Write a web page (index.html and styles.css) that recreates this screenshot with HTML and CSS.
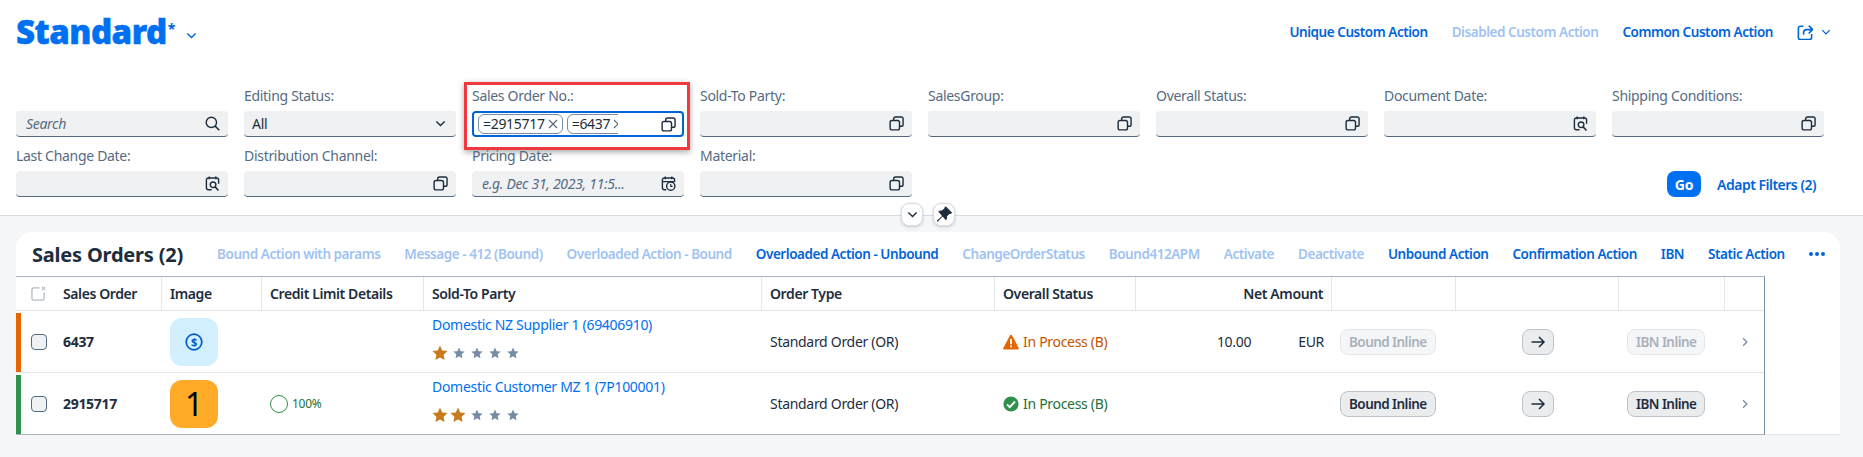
FILE: index.html
```html
<!DOCTYPE html>
<html lang="en">
  <head>
    <meta charset="UTF-8" />
    <meta name="viewport" content="width=device-width, initial-scale=1.0" />
    <title>Sales Orders</title>
    <link rel="stylesheet" href="styles.css">
  </head>
  <body>
    <svg class="defs" width="0" height="0">
      <symbol id="i-copy" viewBox="0 0 16 16">
        <rect x="1.2" y="4.8" width="10" height="10" rx="2" fill="none" stroke="currentColor" stroke-width="1.5" />
        <path d="M5 4.8V3a2 2 0 0 1 2-2h6a2 2 0 0 1 2 2v6a2 2 0 0 1-2 2h-1.8" fill="none" stroke="currentColor" stroke-width="1.5" />
      </symbol>
      <symbol id="i-search" viewBox="0 0 16 16">
        <circle cx="6.8" cy="6.8" r="5.5" fill="none" stroke="currentColor" stroke-width="1.5" />
        <path d="M10.8 10.8l4.4 4.4" stroke="currentColor" stroke-width="1.6" />
      </symbol>
      <symbol id="i-cal-search" viewBox="0 0 16 16">
        <path d="M7 14.6H3.5a2 2 0 0 1-2-2V4.2a2 2 0 0 1 2-2h9a2 2 0 0 1 2 2v4" fill="none" stroke="currentColor" stroke-width="1.5" />
        <path d="M4.5.5v3M11.5.5v3" stroke="currentColor" stroke-width="1.5" />
        <circle cx="8.6" cy="9.4" r="3" fill="none" stroke="currentColor" stroke-width="1.5" />
        <path d="M10.8 11.6l3.6 3.8" stroke="currentColor" stroke-width="1.6" />
      </symbol>
      <symbol id="i-cal-time" viewBox="0 0 16 16">
        <path d="M5.5 14.6h-2a2 2 0 0 1-2-2V4.2a2 2 0 0 1 2-2h9a2 2 0 0 1 2 2v2" fill="none" stroke="currentColor" stroke-width="1.5" />
        <path d="M4.5.5v3M11.5.5v3M1.5 6h13" stroke="currentColor" stroke-width="1.5" />
        <circle cx="10.4" cy="10.8" r="4.4" fill="#eff1f2" stroke="currentColor" stroke-width="1.5" />
        <path d="M10.4 8.6v2.4h2" fill="none" stroke="currentColor" stroke-width="1.2" />
      </symbol>
      <symbol id="i-chevron" viewBox="0 0 16 16">
        <path d="M2 5l6 6 6-6" fill="none" stroke="currentColor" stroke-width="2" />
      </symbol>
      <symbol id="i-close" viewBox="0 0 10 10">
        <path d="M1 1l8 8M9 1l-8 8" fill="none" stroke="currentColor" stroke-width="1.2" />
      </symbol>
      <symbol id="i-star" viewBox="0 0 16 16">
        <path d="M8 .6l2.2 4.9 5.3.6-3.9 3.6 1 5.3L8 12.4l-4.6 2.6 1-5.3L.5 6.1l5.3-.6z" fill="currentColor" />
      </symbol>
    </svg>

    <header class="top">
      <div class="title-row">
        <div class="variant">
          <h1>Standard</h1>
          <span class="dirty">*</span>
          <svg class="variant-arrow"><use href="#i-chevron" /></svg>
        </div>
        <nav class="actions">
          <a class="act">Unique Custom Action</a>
          <a class="act off">Disabled Custom Action</a>
          <a class="act">Common Custom Action</a>
          <span class="share">
            <svg class="share-icon" viewBox="0 0 16 16">
              <path d="M6.5 2.2H3.4a2 2 0 0 0-2 2v9.4a2 2 0 0 0 2 2h9.2a2 2 0 0 0 2-2V10" fill="none" stroke="currentColor" stroke-width="1.6" />
              <path d="M6.6 10.8V8.6a3 3 0 0 1 3-3H15M11.8 1.600L15.6 5.500l-3.800 3.900" fill="none" stroke="currentColor" stroke-width="1.6" />
            </svg>
            <svg class="share-arrow"><use href="#i-chevron" /></svg>
          </span>
        </nav>
      </div>

      <div class="filters">
        <div class="filter">
          <label></label>
          <div class="field"><span class="ph">Search</span><svg class="ico"><use href="#i-search" /></svg></div>
        </div>
        <div class="filter">
          <label>Editing Status:</label>
          <div class="field"><span class="val">All</span><svg class="ico small"><use href="#i-chevron" /></svg></div>
        </div>
        <div class="filter marked">
          <label>Sales Order No.:</label>
          <div class="field focused">
            <div class="tokens">
              <span class="token">=2915717<svg class="token-x"><use href="#i-close" /></svg></span>
              <span class="token">=6437<svg class="token-x"><use href="#i-close" /></svg></span>
            </div>
            <svg class="ico"><use href="#i-copy" /></svg>
          </div>
          <div class="mark"></div>
        </div>
        <div class="filter">
          <label>Sold-To Party:</label>
          <div class="field"><svg class="ico"><use href="#i-copy" /></svg></div>
        </div>
        <div class="filter">
          <label>SalesGroup:</label>
          <div class="field"><svg class="ico"><use href="#i-copy" /></svg></div>
        </div>
        <div class="filter">
          <label>Overall Status:</label>
          <div class="field"><svg class="ico"><use href="#i-copy" /></svg></div>
        </div>
        <div class="filter">
          <label>Document Date:</label>
          <div class="field"><svg class="ico"><use href="#i-cal-search" /></svg></div>
        </div>
        <div class="filter">
          <label>Shipping Conditions:</label>
          <div class="field"><svg class="ico"><use href="#i-copy" /></svg></div>
        </div>
        <div class="filter">
          <label>Last Change Date:</label>
          <div class="field"><svg class="ico"><use href="#i-cal-search" /></svg></div>
        </div>
        <div class="filter">
          <label>Distribution Channel:</label>
          <div class="field"><svg class="ico"><use href="#i-copy" /></svg></div>
        </div>
        <div class="filter">
          <label>Pricing Date:</label>
          <div class="field"><span class="ph">e.g. Dec 31, 2023, 11:5...</span><svg class="ico"><use href="#i-cal-time" /></svg></div>
        </div>
        <div class="filter">
          <label>Material:</label>
          <div class="field"><svg class="ico"><use href="#i-copy" /></svg></div>
        </div>
        <div class="filter-btns">
          <button class="go">Go</button>
          <a class="adapt">Adapt Filters (2)</a>
        </div>
      </div>
    </header>

    <div class="collapse-btns">
      <span class="mini"><svg class="mini-arrow"><use href="#i-chevron" /></svg></span>
      <span class="mini">
        <svg class="pin" viewBox="0 0 16 16">
          <path d="M9.600.8l5.600 5.600-1.400 1.100-1.100-.2-2.500 2.600c.4 1.300.1 2.500-.8 3.500L6.200 9.800l-4.600 5-.9-.9 5-4.600L2.100 5.100c1-.9 2.200-1.200 3.500-.8l2.600-2.500-.2-1.100z" fill="currentColor" />
        </svg>
      </span>
    </div>

    <section class="card">
      <div class="toolbar">
        <h2>Sales Orders (2)</h2>
        <a class="act off">Bound Action with params</a>
        <a class="act off">Message - 412 (Bound)</a>
        <a class="act off">Overloaded Action - Bound</a>
        <a class="act">Overloaded Action - Unbound</a>
        <a class="act off">ChangeOrderStatus</a>
        <a class="act off">Bound412APM</a>
        <a class="act off">Activate</a>
        <a class="act off">Deactivate</a>
        <a class="act">Unbound Action</a>
        <a class="act">Confirmation Action</a>
        <a class="act">IBN</a>
        <a class="act">Static Action</a>
        <span class="more"><i></i><i></i><i></i></span>
      </div>

      <table class="orders">
        <colgroup>
          <col class="c1" /><col class="c2" /><col class="c3" /><col class="c4" />
          <col class="c5" /><col class="c6" /><col class="c7" /><col class="c8" />
          <col class="c9" /><col class="c10" /><col class="c11" />
        </colgroup>
        <thead>
          <tr>
            <th class="first">
              <div class="sel">
                <svg class="clear-all" viewBox="0 0 16 16">
                  <path d="M9 2H3a2 2 0 0 0-2 2v9a2 2 0 0 0 2 2h9a2 2 0 0 0 2-2V7" fill="none" stroke="currentColor" stroke-width="1.4" />
                  <path d="M11.500 1l3.500 3.500M15 1l-3.500 3.500" stroke="currentColor" stroke-width="1.2" />
                </svg>
                Sales Order
              </div>
            </th>
            <th>Image</th>
            <th>Credit Limit Details</th>
            <th>Sold-To Party</th>
            <th>Order Type</th>
            <th>Overall Status</th>
            <th class="right">Net Amount</th>
            <th></th>
            <th></th>
            <th></th>
            <th></th>
          </tr>
        </thead>
        <tbody>
          <tr>
            <td class="first">
              <div class="sel"><span class="bar warn"></span><span class="check"></span><b>6437</b></div>
            </td>
            <td><div class="thumb blue">
              <svg class="dollar" viewBox="0 0 18 18">
                <circle cx="9" cy="9" r="7.800" fill="none" stroke="currentColor" stroke-width="1.700" />
                <text x="9" y="13" text-anchor="middle" class="dollar-sign">$</text>
              </svg>
            </div></td>
            <td></td>
            <td class="party">
              <a class="link">Domestic NZ Supplier 1 (69406910)</a>
              <div class="stars">
                <svg class="star on"><use href="#i-star" /></svg>
                <svg class="star"><use href="#i-star" /></svg>
                <svg class="star"><use href="#i-star" /></svg>
                <svg class="star"><use href="#i-star" /></svg>
                <svg class="star"><use href="#i-star" /></svg>
              </div>
            </td>
            <td>Standard Order (OR)</td>
            <td>
              <div class="status warning">
                <svg class="status-ico" viewBox="0 0 16 16">
                  <path d="M8 .8a1 1 0 0 1 .9.5l6.800 12.600a1 1 0 0 1-.9 1.500H1.200a1 1 0 0 1-.9-1.500L7.100 1.300A1 1 0 0 1 8 .8z" fill="currentColor" />
                  <path d="M8 5v5.200M8 11.400v1.800" stroke="#fff" stroke-width="1.800" />
                </svg>
                In Process (B)
              </div>
            </td>
            <td><div class="amount"><span>10.00</span><span>EUR</span></div></td>
            <td><button class="inline" disabled>Bound Inline</button></td>
            <td class="center"><button class="inline arrow"><svg viewBox="0 0 16 16"><path d="M1.500 8h12.500M9 3l5 5-5 5" fill="none" stroke="currentColor" stroke-width="1.500" /></svg></button></td>
            <td><button class="inline" disabled>IBN Inline</button></td>
            <td class="center"><svg class="nav"><use href="#i-chevron" /></svg></td>
          </tr>
          <tr>
            <td class="first">
              <div class="sel"><span class="bar ok"></span><span class="check"></span><b>2915717</b></div>
            </td>
            <td><div class="thumb orange">1</div></td>
            <td>
              <div class="progress"><span class="ring"></span>100%</div>
            </td>
            <td class="party">
              <a class="link">Domestic Customer MZ 1 (7P100001)</a>
              <div class="stars">
                <svg class="star on"><use href="#i-star" /></svg>
                <svg class="star on"><use href="#i-star" /></svg>
                <svg class="star"><use href="#i-star" /></svg>
                <svg class="star"><use href="#i-star" /></svg>
                <svg class="star"><use href="#i-star" /></svg>
              </div>
            </td>
            <td>Standard Order (OR)</td>
            <td>
              <div class="status success">
                <svg class="status-ico" viewBox="0 0 16 16">
                  <circle cx="8" cy="8" r="7.600" fill="currentColor" />
                  <path d="M4 8.300l2.800 2.800 5.200-5.600" fill="none" stroke="#fff" stroke-width="1.900" />
                </svg>
                In Process (B)
              </div>
            </td>
            <td></td>
            <td><button class="inline">Bound Inline</button></td>
            <td class="center"><button class="inline arrow"><svg viewBox="0 0 16 16"><path d="M1.500 8h12.500M9 3l5 5-5 5" fill="none" stroke="currentColor" stroke-width="1.500" /></svg></button></td>
            <td><button class="inline">IBN Inline</button></td>
            <td class="center"><svg class="nav"><use href="#i-chevron" /></svg></td>
          </tr>
        </tbody>
      </table>
    </section>
  </body>
</html>
```

FILE: styles.css
```css
html,
body {
  margin: 0;
  padding: 0;
}

body {
  font-family: "Noto Sans", Arial, sans-serif;
  font-size: 14px;
  letter-spacing: -0.3px;
  color: #1d2d3e;
  background-color: #f5f6f7;
  height: 457px;
  overflow: hidden;
}

.defs {
  display: block;
  height: 0;
}

a {
  text-decoration: none;
}

/* top header */
.top {
  background-color: #fff;
  border-bottom: 1px solid #d9dde1;
  height: 215px;
}

.title-row {
  display: flex;
  justify-content: space-between;
  align-items: center;
  height: 64px;
  padding: 0 32px 0 16px;
}

.variant {
  display: flex;
  align-items: center;
}

h1 {
  margin: 0;
  font-size: 33px;
  font-weight: 900;
  line-height: 40px;
  letter-spacing: -0.5px;
  color: #0070f2;
  -webkit-text-stroke: 0.5px #0070f2;
}

.dirty {
  color: #0064d9;
  font-size: 14px;
  font-weight: 700;
  margin: -8px 0 0 1px;
}

.variant-arrow {
  width: 11px;
  height: 11px;
  margin: 6px 0 0 11px;
  color: #0064d9;
}

.actions {
  display: flex;
  align-items: center;
  gap: 24px;
}

.act {
  font-size: 13.5px;
  font-weight: 600;
  letter-spacing: -0.45px;
  color: #0064d9;
  white-space: nowrap;
}

.act.off {
  color: #9fc3f2;
}

.share {
  display: flex;
  align-items: center;
  gap: 8px;
  color: #0064d9;
}

.share-icon {
  width: 16px;
  height: 16px;
}

.share-arrow {
  width: 10px;
  height: 10px;
}

/* filter bar */
.filters {
  display: grid;
  grid-template-columns: repeat(8, 212px);
  column-gap: 16px;
  row-gap: 10px;
  padding: 23px 0 0 16px;
}

.filter {
  position: relative;
  height: 50px;
}

.filter label {
  display: block;
  height: 18px;
  line-height: 18px;
  margin-bottom: 6px;
  color: #556b82;
}

.field {
  display: flex;
  align-items: center;
  box-sizing: border-box;
  height: 26px;
  padding: 0 8px 0 10px;
  background-color: #eff1f2;
  border-bottom: 1px solid #556b81;
  border-radius: 4px;
}

.field.focused {
  background-color: #fff;
  border: 2px solid #0064d9;
  padding: 0 6px 0 4px;
}

.ph {
  font-style: italic;
  color: #556b82;
  white-space: nowrap;
}

.val {
  color: #1d2d3e;
  margin-left: -2px;
}

.ico {
  width: 15px;
  height: 15px;
  flex-shrink: 0;
  margin-left: auto;
  color: #1d2d3e;
}

.ico.small {
  width: 11px;
  height: 11px;
  margin-right: 2px;
}

.tokens {
  display: flex;
  gap: 4px;
  width: 140px;
  overflow: hidden;
}

.token {
  flex-shrink: 0;
  display: flex;
  align-items: center;
  gap: 3px;
  box-sizing: border-box;
  height: 20px;
  line-height: 18px;
  padding: 0 4px 0 4px;
  border: 1px solid #788fa6;
  border-radius: 6px;
  white-space: nowrap;
}

.token-x {
  width: 10px;
  height: 10px;
  color: #556b82;
}

.mark {
  position: absolute;
  left: -8px;
  top: -5px;
  width: 226px;
  height: 68px;
  box-sizing: border-box;
  border: 3px solid #f0393f;
  box-shadow: 0 2px 6px rgba(0, 0, 0, 0.35);
  pointer-events: none;
}

.filter-btns {
  grid-column: 7 / 9;
  display: flex;
  justify-content: flex-end;
  align-items: center;
  gap: 16px;
  height: 26px;
  margin-top: 24px;
  padding-right: 8px;
}

.go {
  width: 34px;
  height: 26px;
  padding: 0;
  font: inherit;
  letter-spacing: inherit;
  font-weight: 700;
  color: #fff;
  background-color: #0070f2;
  border: none;
  border-radius: 8px;
}

.adapt {
  font-weight: 600;
  letter-spacing: -0.5px;
  color: #0064d9;
}

/* collapse + pin buttons */
.collapse-btns {
  display: flex;
  justify-content: center;
  gap: 10px;
  height: 23px;
  margin-top: -13px;
  padding-right: 7px;
}

.mini {
  display: flex;
  align-items: center;
  justify-content: center;
  width: 22px;
  height: 23px;
  box-sizing: border-box;
  background-color: #fff;
  border: 1px solid #d9dde1;
  border-radius: 8px;
  box-shadow: 0 1px 3px rgba(85, 107, 130, 0.3);
}

.mini-arrow {
  width: 11px;
  height: 11px;
  color: #1d2d3e;
}

.pin {
  width: 17px;
  height: 17px;
  color: #1d2d3e;
}

/* table card */
.card {
  margin: 6px 23px 0 16px;
  height: 203px;
  background-color: #fff;
  border-radius: 16px 16px 0 0;
  border-bottom: 1px solid #e5e7ea;
  box-sizing: border-box;
}

.toolbar {
  display: flex;
  align-items: center;
  gap: 24px;
  height: 44px;
  padding: 0 16px;
}

h2 {
  margin: 0 10px 0 0;
  font-size: 20px;
  font-weight: 700;
  letter-spacing: -0.2px;
  white-space: nowrap;
}

.more {
  display: flex;
  gap: 2px;
}

.more i {
  width: 4px;
  height: 4px;
  border-radius: 50%;
  background-color: #0064d9;
}

.orders {
  table-layout: fixed;
  width: 1749px;
  border-collapse: separate;
  border-spacing: 0;
  border-top: 1px solid #a9b4be;
  border-right: 1px solid #758ca4;
  border-bottom: 1px solid #a9b4be;
}

.c1 { width: 146px; }
.c2 { width: 100px; }
.c3 { width: 162px; }
.c4 { width: 338px; }
.c5 { width: 233px; }
.c6 { width: 141px; }
.c7 { width: 196px; }
.c8 { width: 124px; }
.c9 { width: 163px; }
.c10 { width: 106px; }
.c11 { width: 39px; }

th {
  height: 34px;
  padding: 0 8px;
  text-align: left;
  font-weight: 600;
  letter-spacing: -0.4px;
  border-right: 1px solid #e5e7ea;
  border-bottom: 1px solid #e5e7ea;
  box-sizing: border-box;
}

th:last-child {
  border-right: none;
}

th.right {
  text-align: right;
}

td {
  height: 62px;
  padding: 0 8px;
  border-bottom: 1px solid #e5e7ea;
  box-sizing: border-box;
  white-space: nowrap;
}

tbody tr:last-child td {
  border-bottom: none;
  height: 61px;
}

th.first,
td.first {
  padding: 0;
}

.sel {
  display: flex;
  align-items: center;
  height: 100%;
  padding-left: 15px;
}

td .sel {
  position: relative;
  height: 61px;
}

.bar {
  position: absolute;
  left: 0;
  top: 2px;
  bottom: 0;
  width: 5px;
}

.bar.warn {
  background-color: #e76500;
}

.bar.ok {
  background-color: #30914c;
}

.clear-all {
  width: 15px;
  height: 15px;
  margin-right: 17px;
  color: #b4bcc5;
}

.check {
  width: 16px;
  height: 16px;
  box-sizing: border-box;
  margin-right: 16px;
  background-color: #eff1f2;
  border: 1px solid #556b81;
  border-radius: 4px;
}

.thumb {
  display: flex;
  align-items: center;
  justify-content: center;
  width: 48px;
  height: 48px;
  border-radius: 12px;
}

.thumb.blue {
  background-color: #d1efff;
  color: #0057d2;
}

.thumb.orange {
  background-color: #ffab28;
  font-size: 32px;
  color: #000;
}

.dollar {
  width: 18px;
  height: 18px;
}

.dollar-sign {
  font-size: 11px;
  font-weight: 700;
  fill: currentColor;
}

.progress {
  display: flex;
  align-items: center;
  gap: 4px;
  font-size: 12px;
  color: #256f3a;
}

.ring {
  width: 18px;
  height: 18px;
  box-sizing: border-box;
  border: 1.5px solid #30914c;
  border-radius: 50%;
}

td.party {
  vertical-align: top;
  padding-top: 5px;
}

.link {
  display: block;
  line-height: 18px;
  color: #0070f2;
}

.stars {
  display: flex;
  align-items: center;
  height: 18px;
  margin-top: 10px;
}

.star {
  width: 12px;
  height: 12px;
  margin: 0 3px;
  color: #758ca4;
}

.star.on {
  width: 16px;
  height: 16px;
  margin: 0 2px 0 0;
  color: #c87b1c;
}

.status {
  display: flex;
  align-items: center;
  gap: 4px;
}

.status.warning {
  color: #c35500;
}

.status.warning .status-ico {
  color: #e76500;
}

.status.success {
  color: #256f3a;
}

.status.success .status-ico {
  color: #30914c;
}

.status-ico {
  width: 16px;
  height: 16px;
}

.amount {
  display: flex;
  justify-content: flex-end;
  gap: 47px;
}

.inline {
  height: 26px;
  padding: 0 8px;
  font: inherit;
  font-size: 13.5px;
  letter-spacing: -0.55px;
  font-weight: 600;
  color: #1d2d3e;
  background-color: #eaecee;
  border: 1px solid #bcc3ca;
  border-radius: 8px;
}

.inline:disabled {
  color: #a8b1ba;
  background-color: #f5f6f7;
  border-color: #e5e7ea;
}

.arrow {
  display: inline-flex;
  align-items: center;
  justify-content: center;
  width: 32px;
  padding: 0;
}

.arrow svg {
  width: 16px;
  height: 16px;
}

.center {
  text-align: center;
}

.nav {
  width: 10px;
  height: 10px;
  color: #758ca4;
  transform: rotate(-90deg);
}
```
